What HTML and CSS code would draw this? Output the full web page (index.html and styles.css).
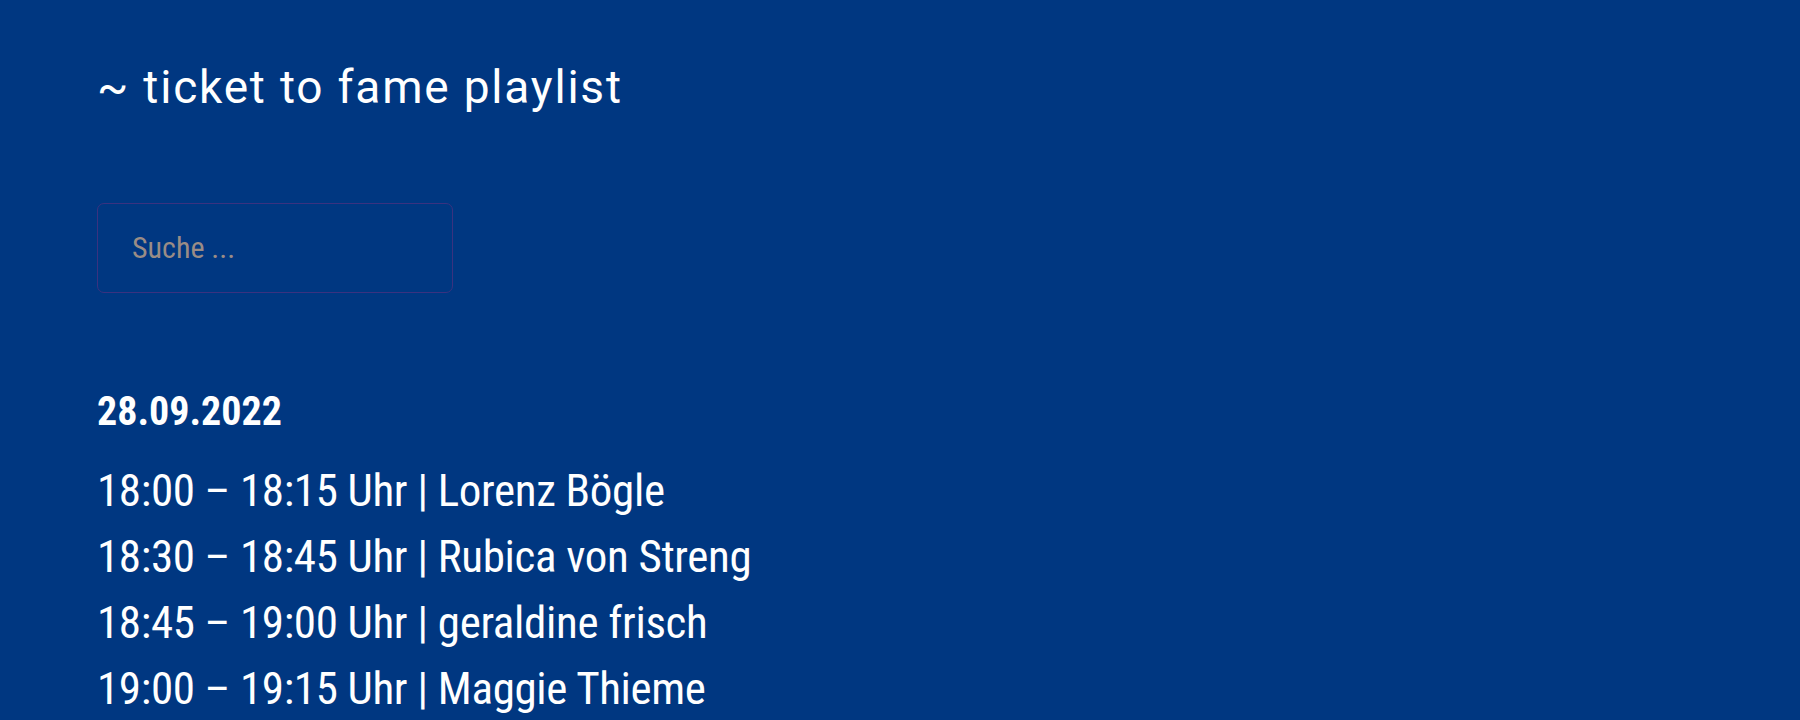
FILE: index.html
```html
<!DOCTYPE html>
<html lang="de">
<head>
    <meta charset="UTF-8">
    <meta name="viewport" content="width=device-width, initial-scale=1.0">
    <title>ticket to fame playlist</title>
    <link rel="stylesheet" href="styles.css">
</head>
<body>
    <main class="page">
        <h1 class="page-title">~ ticket to fame playlist</h1>

        <form class="search" role="search">
            <input type="search" class="search-field" placeholder="Suche ...">
        </form>

        <section class="playlist">
            <h2 class="playlist-date">28.09.2022</h2>
            <ul class="slots">
                <li>18:00 – 18:15 Uhr | Lorenz Bögle</li>
                <li>18:30 – 18:45 Uhr | Rubica von Streng</li>
                <li>18:45 – 19:00 Uhr | geraldine frisch</li>
                <li>19:00 – 19:15 Uhr | Maggie Thieme</li>
            </ul>
        </section>
    </main>
</body>
</html>
```
FILE: styles.css
```css
body {
    margin: 0;
    background: #003781;
    color: #fff;
    font-family: "Roboto Condensed", Roboto, "Liberation Sans", sans-serif;
    overflow: hidden;
}
.page {
    padding: 59px 97px 0;
}
.page-title {
    margin: 0;
    font-family: Roboto, "Roboto Condensed", sans-serif;
    font-size: 46px;
    font-weight: 400;
    letter-spacing: 1.8px;
    line-height: 56px;
}
.search {
    margin-top: 88px;
}
.search-field {
    box-sizing: border-box;
    width: 356px;
    height: 90px;
    padding: 0 0 2px 34px;
    border: 1px solid #3a3280;
    border-radius: 7px;
    background: transparent;
    color: #fff;
    font-family: inherit;
    font-size: 30px;
    outline: none;
}
.search-field::placeholder {
    color: #9a8c86;
}
.playlist-date {
    margin: 95px 0 0;
    font-size: 40px;
    font-weight: 700;
    line-height: 48px;
}
.slots {
    list-style: none;
    margin: 22px 0 0;
    padding: 0;
}
.slots li {
    font-size: 45px;
    letter-spacing: -0.35px;
    line-height: 66px;
}
```
